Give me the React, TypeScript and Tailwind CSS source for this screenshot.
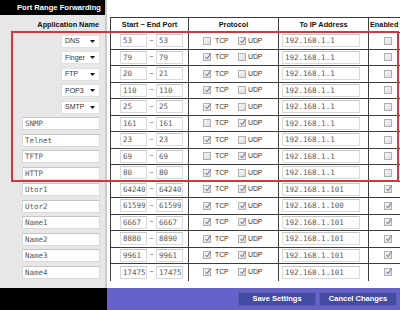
type Rule = {
  name: string;
  select?: boolean;
  from: string;
  to: string;
  tcp: boolean;
  udp: boolean;
  ip: string;
  enabled: boolean;
};

const rules: Rule[] = [
  { name: 'DNS', select: true, from: '53', to: '53', tcp: false, udp: true, ip: '192.168.1.1', enabled: false },
  { name: 'Finger', select: true, from: '79', to: '79', tcp: true, udp: false, ip: '192.168.1.1', enabled: false },
  { name: 'FTP', select: true, from: '20', to: '21', tcp: true, udp: false, ip: '192.168.1.1', enabled: false },
  { name: 'POP3', select: true, from: '110', to: '110', tcp: true, udp: false, ip: '192.168.1.1', enabled: false },
  { name: 'SMTP', select: true, from: '25', to: '25', tcp: true, udp: false, ip: '192.168.1.1', enabled: false },
  { name: 'SNMP', from: '161', to: '161', tcp: false, udp: true, ip: '192.168.1.1', enabled: false },
  { name: 'Telnet', from: '23', to: '23', tcp: true, udp: false, ip: '192.168.1.1', enabled: false },
  { name: 'TFTP', from: '69', to: '69', tcp: false, udp: true, ip: '192.168.1.1', enabled: false },
  { name: 'HTTP', from: '80', to: '80', tcp: true, udp: false, ip: '192.168.1.1', enabled: false },
  { name: 'Utor1', from: '64240', to: '64240', tcp: true, udp: true, ip: '192.168.1.101', enabled: true },
  { name: 'Utor2', from: '61599', to: '61599', tcp: true, udp: true, ip: '192.168.1.100', enabled: true },
  { name: 'Name1', from: '6667', to: '6667', tcp: true, udp: true, ip: '192.168.1.101', enabled: true },
  { name: 'Name2', from: '8880', to: '8890', tcp: true, udp: true, ip: '192.168.1.101', enabled: true },
  { name: 'Name3', from: '9961', to: '9961', tcp: true, udp: true, ip: '192.168.1.101', enabled: true },
  { name: 'Name4', from: '17475', to: '17475', tcp: true, udp: true, ip: '192.168.1.101', enabled: true },
];

function Check({ on }: { on: boolean }) {
  return (
    <span className="relative inline-block h-[8px] w-[8px] shrink-0 border border-[#b0b0b0] bg-linear-to-br from-[#f7f7f7] to-[#dcdcdc]">
      {on && (
        <svg viewBox="0 0 8 8" className="absolute left-0 top-[-1px] h-[8px] w-[8px] overflow-visible">
          <path d="M1.4 3.8 L3 5.7 L6.5 0.8" stroke="#5a6896" strokeWidth="1" fill="none" />
        </svg>
      )}
    </span>
  );
}

function TextBox({ value, w }: { value: string; w: string }) {
  return (
    <div className={`${w} flex h-[13px] items-center border border-[#dadada] border-t-[#c6c6c6] bg-white pl-[2px] font-['DejaVu_Sans_Mono',monospace] text-[7.5px] text-[#5a5a5a]`}>
      {value}
    </div>
  );
}

function SelectBox({ value }: { value: string }) {
  return (
    <div className="flex h-[13px] w-[39px] items-center justify-between border border-[#e0e0e0] bg-white pl-[3px] pr-[4px] text-[7px] text-[#333]">
      <span>{value}</span>
      <svg viewBox="0 0 5 3" className="h-[3px] w-[5px]">
        <path d="M0 0 L5 0 L2.5 3 Z" fill="#111" />
      </svg>
    </div>
  );
}

export default function App() {
  const cell = 'flex h-full items-center border-l border-[#3c3c3c]';

  return (
    <div className="relative h-[310px] w-[400px] overflow-hidden bg-white font-['Liberation_Sans',Arial,sans-serif]">
      <div className="flex h-[288px]">
        {/* left panel: names */}
        <div className="flex w-[107px] shrink-0 flex-col border-r-2 border-[#cacaca] bg-[#e7e7e7]">
          <div className="flex h-[15px] items-center justify-end bg-black pr-[4px] text-[7.6px] font-bold text-white">
            Port Range Forwarding
          </div>
          <div className="h-[2px]" />
          <div className="flex h-[16px] items-center justify-end pr-[6px] text-[7.3px] font-bold text-[#111]">
            Application Name
          </div>
          {rules.map((r) => (
            <div key={r.name} className="flex h-[16.5px] items-center justify-end pr-[5px]">
              {r.select ? <SelectBox value={r.name} /> : <TextBox value={r.name} w="w-[78px]" />}
            </div>
          ))}
        </div>

        {/* right panel: table */}
        <div className="flex-1 pl-[3px] pt-[17px]">
          <div className="flex h-[16px] w-[300px] border-t border-[#3c3c3c] text-[7.3px] font-bold text-[#111]">
            <div className={`${cell} w-[78px] justify-center border-b`}>Start ~ End Port</div>
            <div className={`${cell} w-[90px] justify-center border-b`}>Protocol</div>
            <div className={`${cell} w-[90px] justify-center border-b`}>To IP Address</div>
            <div className={`${cell} w-[38px] border-b pl-[1px]`}>Enabled</div>
          </div>
          {rules.map((r, i) => {
            const last = i === rules.length - 1 ? '' : 'border-b';
            return (
              <div key={r.name} className="flex h-[16.5px] w-[300px]">
                <div className={`${cell} ${last} w-[78px] pl-[9px]`}>
                  <TextBox value={r.from} w="w-[27px]" />
                  <span className="w-[9px] text-center text-[7px] text-[#555]">~</span>
                  <TextBox value={r.to} w="w-[27px]" />
                </div>
                <div className={`${cell} ${last} w-[90px] pl-[14px] text-[6.8px] text-[#333]`}>
                  <Check on={r.tcp} />
                  <span className="ml-[4px] w-[23px]">TCP</span>
                  <Check on={r.udp} />
                  <span className="ml-[2px]">UDP</span>
                </div>
                <div className={`${cell} ${last} w-[90px] pl-[3px]`}>
                  <TextBox value={r.ip} w="w-[78px]" />
                </div>
                <div className={`${cell} ${last} w-[38px] justify-center`}>
                  <Check on={r.enabled} />
                </div>
              </div>
            );
          })}
        </div>
      </div>

      {/* bottom bar */}
      <div className="flex h-[22px]">
        <div className="w-[107px] bg-black" />
        <div className="flex flex-1 items-center justify-end gap-[3px] bg-[#6562c9] pr-[3px]">
          <button className="h-[14px] w-[78px] border border-[#5a5fb4] bg-[#434ba3] text-[7.5px] font-bold text-white">
            Save Settings
          </button>
          <button className="h-[14px] w-[78px] border border-[#5a5fb4] bg-[#434ba3] text-[7.5px] font-bold text-white">
            Cancel Changes
          </button>
        </div>
      </div>

      {/* highlight frame */}
      <div className="pointer-events-none absolute left-[11px] top-[31px] h-[151px] w-[388px] border-2 border-[#d2373f]" />
    </div>
  );
}
